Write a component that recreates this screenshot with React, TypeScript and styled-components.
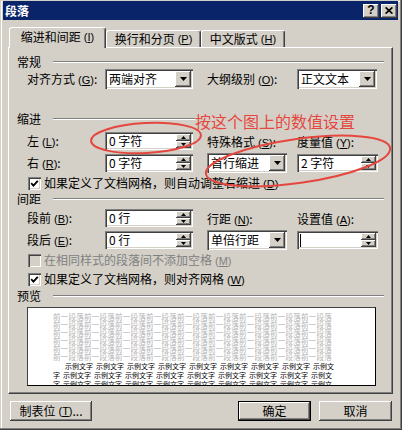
import React from 'react';
import styled, { createGlobalStyle } from 'styled-components';

const GlobalStyle = createGlobalStyle`
  html, body {
    margin: 0;
    padding: 0;
    background: #d4d0c8;
  }
  body {
    font-family: "Noto Sans CJK SC", "Liberation Sans", sans-serif;
    font-size: 12px;
    color: #000;
  }
  * {
    box-sizing: border-box;
  }
`;

const raised = `
  background: #d4d0c8;
  box-shadow: inset -1px -1px #404040, inset 1px 1px #ffffff, inset -2px -2px #808080, inset 2px 2px #d4d0c8;
`;

const sunken = `
  background: #ffffff;
  box-shadow: inset 1px 1px #808080, inset 2px 2px #404040, inset -1px -1px #ffffff, inset -2px -2px #d4d0c8;
`;

const Window = styled.div`
  position: relative;
  width: 402px;
  height: 430px;
  padding: 1px 4px 4px 3px;
  display: flex;
  flex-direction: column;
  background: #d4d0c8;
  box-shadow: inset -1px -1px #404040, inset -2px -2px #808080, inset 1px 1px #d4d0c8, inset 2px 2px #ffffff;
  overflow: hidden;
`;

const TitleBar = styled.div`
  height: 19px;
  background: #0a246a;
  display: flex;
  align-items: center;
  justify-content: space-between;
  padding: 0 1px 0 2px;
`;

const Title = styled.span`
  color: #fff;
  font-weight: bold;
  font-size: 12px;
  line-height: 14px;
`;

const CaptionButtons = styled.div`
  display: flex;
  gap: 2px;
`;

const CaptionButton = styled.div`
  ${raised}
  width: 16px;
  height: 14px;
  display: flex;
  align-items: center;
  justify-content: center;
  font: bold 12px "Liberation Sans", sans-serif;
  line-height: 12px;
  padding-bottom: 1px;
`;

const Body = styled.div`
  flex: 1;
  display: flex;
  flex-direction: column;
  padding: 7px 5px 0 5px;
`;

const TabRow = styled.div`
  height: 20px;
  display: flex;
  align-items: flex-end;
  padding-left: 1px;
  position: relative;
  z-index: 1;
`;

const Tab = styled.div<{ $active?: boolean; $w: number }>`
  width: ${(p) => p.$w}px;
  height: ${(p) => (p.$active ? 21 : 17)}px;
  margin-bottom: ${(p) => (p.$active ? -1 : 0)}px;
  background: #d4d0c8;
  border-top: 1px solid #fff;
  border-left: 1px solid #fff;
  border-right: 1px solid #404040;
  border-radius: 3px 3px 0 0;
  box-shadow: inset -1px 0 #808080;
  display: flex;
  align-items: center;
  justify-content: center;
  line-height: 14px;
  padding-bottom: ${(p) => (p.$active ? 2 : 0)}px;
  white-space: nowrap;
`;

const Panel = styled.div`
  height: 347px;
  border-top: 1px solid #fff;
  border-left: 1px solid #fff;
  border-right: 1px solid #404040;
  border-bottom: 1px solid #404040;
  box-shadow: inset -1px -1px #808080;
  padding: 7px 8px 0 8px;
  display: flex;
  flex-direction: column;
`;

const GroupHeader = styled.div<{ $mt?: number }>`
  height: 14px;
  line-height: 14px;
  margin-top: ${(p) => p.$mt ?? 0}px;
  display: flex;
  align-items: center;
  gap: 12px;

  &::after {
    content: '';
    flex: 1;
    border-top: 1px solid #808080;
    border-bottom: 1px solid #fff;
  }
`;

const FieldGrid = styled.div<{ $mt?: number }>`
  display: grid;
  grid-template-columns: 78px 102px 90px 81px;
  row-gap: 3px;
  align-items: center;
  margin: ${(p) => p.$mt ?? 0}px 0 0 10px;
`;

const Label = styled.span<{ $bottom?: boolean }>`
  line-height: 14px;
  white-space: nowrap;
  align-self: ${(p) => (p.$bottom ? 'end' : 'center')};
`;

const Key = styled.span`
  font-family: "Liberation Sans", sans-serif;
  font-size: 11px;
  margin-left: 3px;
`;

const Combo = styled.div<{ $w: number }>`
  ${sunken}
  width: ${(p) => p.$w}px;
  height: 20px;
  padding: 2px;
  display: flex;
  align-items: stretch;
`;

const FieldText = styled.span`
  flex: 1;
  padding-left: 2px;
  line-height: 14px;
  align-self: center;
  white-space: nowrap;
`;

const DropButton = styled.div`
  ${raised}
  width: 16px;
  display: flex;
  align-items: center;
  justify-content: center;
`;

const Spin = styled.div<{ $w: number }>`
  ${sunken}
  width: ${(p) => p.$w}px;
  height: 18px;
  padding: 2px;
  display: flex;
  align-items: stretch;
`;

const Caret = styled.span`
  display: inline-block;
  width: 1px;
  height: 13px;
  background: #000;
  margin-left: 1px;
  align-self: center;
`;

const SpinButtons = styled.div`
  width: 15px;
  display: flex;
  flex-direction: column;
`;

const SpinButton = styled.div`
  ${raised}
  flex: 1;
  display: flex;
  align-items: center;
  justify-content: center;
`;

const CheckRow = styled.div<{ $mt: number; $disabled?: boolean }>`
  display: flex;
  align-items: center;
  gap: 3px;
  margin: ${(p) => p.$mt}px 0 0 11px;
  height: 14px;
  line-height: 14px;
  color: ${(p) => (p.$disabled ? '#808080' : '#000')};
  white-space: nowrap;
`;

const CheckBox = styled.div<{ $disabled?: boolean }>`
  ${sunken}
  width: 13px;
  height: 13px;
  background: ${(p) => (p.$disabled ? '#d4d0c8' : '#fff')};
  display: flex;
  align-items: center;
  justify-content: center;
`;

const Preview = styled.div`
  margin: 4px 0 0 10px;
  width: 349px;
  height: 79px;
  background: #fff;
  border: 1px solid #000;
  border-left-color: #404040;
  border-top-color: #404040;
  padding: 5px 0 0 25px;
  overflow: hidden;
`;

/* the page preview is tiny; draw it at double size and halve it */
const PreviewText = styled.div`
  transform: scale(0.5);
  transform-origin: 0 0;
  width: 600px;
`;

const GhostLine = styled.div`
  width: 558px;
  font-size: 15px;
  letter-spacing: 0.5px;
  line-height: 16px;
  height: 16px;
  color: #b4b4b4;
  white-space: nowrap;
  overflow: hidden;
`;

const SampleLine = styled.div<{ $indent?: boolean }>`
  display: flex;
  gap: 6px;
  height: 18px;
  padding-left: ${(p) => (p.$indent ? 24 : 0)}px;
`;

const SampleWord = styled.span<{ $n: number }>`
  flex: none;
  width: ${(p) => p.$n * 14}px;
  overflow: hidden;
  font-size: 14px;
  line-height: 18px;
  white-space: nowrap;
`;

const Footer = styled.div`
  display: flex;
  align-items: center;
  padding: 7px 1px 0 2px;
  gap: 8px;
`;

const Button = styled.div<{ $w: number; $default?: boolean }>`
  ${raised}
  width: ${(p) => p.$w}px;
  height: 20px;
  display: flex;
  align-items: center;
  justify-content: center;
  line-height: 14px;
  white-space: nowrap;
  border: ${(p) => (p.$default ? '1px solid #000' : 'none')};
`;

const Spacer = styled.div`
  flex: 1;
`;

const Annotation = styled.div`
  position: absolute;
  left: 195px;
  top: 111px;
  width: 192px;
  height: 20px;
  background: #d4d0c8;
  color: #e5473f;
  font-size: 16px;
  line-height: 20px;
  white-space: nowrap;
`;

const Marks = styled.svg`
  position: absolute;
  left: 0;
  top: 0;
  pointer-events: none;
`;

function Acc({ k }: { k: string }) {
  return (
    <Key>
      (<u>{k}</u>)
    </Key>
  );
}

function DownArrow({ w = 7, h = 4 }: { w?: number; h?: number }) {
  return (
    <svg width={w} height={h} viewBox={`0 0 ${w} ${h}`}>
      <polygon points={`0,0 ${w},0 ${w / 2},${h}`} fill="#000" />
    </svg>
  );
}

function UpArrow() {
  return (
    <svg width={5} height={3} viewBox="0 0 5 3">
      <polygon points="0,3 5,3 2.5,0" fill="#000" />
    </svg>
  );
}

function ComboBox({ w, value }: { w: number; value: string }) {
  return (
    <Combo $w={w}>
      <FieldText>{value}</FieldText>
      <DropButton>
        <DownArrow />
      </DropButton>
    </Combo>
  );
}

function SpinBox({ w, value }: { w: number; value?: string }) {
  return (
    <Spin $w={w}>
      {value ? (
        <FieldText>{value}</FieldText>
      ) : (
        <>
          <Caret />
          <FieldText />
        </>
      )}
      <SpinButtons>
        <SpinButton>
          <UpArrow />
        </SpinButton>
        <SpinButton>
          <DownArrow w={5} h={3} />
        </SpinButton>
      </SpinButtons>
    </Spin>
  );
}

function Check({ label, k, mt, disabled }: { label: string; k: string; mt: number; disabled?: boolean }) {
  return (
    <CheckRow $mt={mt} $disabled={disabled}>
      <CheckBox $disabled={disabled}>
        {!disabled && (
          <svg width={9} height={9} viewBox="0 0 9 9">
            <path d="M1.2 4.2 L3.4 6.6 L7.8 1.8" stroke="#000" strokeWidth={1.8} fill="none" />
          </svg>
        )}
      </CheckBox>
      <span>
        {label}
        <Acc k={k} />
      </span>
    </CheckRow>
  );
}

const ghost = '前一段落'.repeat(9);
const words = Array.from({ length: 8 }, () => '示例文字');
const sampleFirst = [...words, '示例文'];
const sampleRest = ['字', ...words, '示例文'];

function Sample({ items, indent }: { items: string[]; indent?: boolean }) {
  return (
    <SampleLine $indent={indent}>
      {items.map((w, i) => (
        <SampleWord key={i} $n={w.length}>
          {w}
        </SampleWord>
      ))}
    </SampleLine>
  );
}

export default function App() {
  return (
    <Window>
      <GlobalStyle />
      <TitleBar>
        <Title>段落</Title>
        <CaptionButtons>
          <CaptionButton>?</CaptionButton>
          <CaptionButton>
            <svg width={8} height={7} viewBox="0 0 8 7">
              <path d="M0.6 0.4 L7.4 6.6 M7.4 0.4 L0.6 6.6" stroke="#000" strokeWidth={1.7} />
            </svg>
          </CaptionButton>
        </CaptionButtons>
      </TitleBar>

      <Body>
        <TabRow>
          <Tab $active $w={97}>
            缩进和间距<Acc k="I" />
          </Tab>
          <Tab $w={95}>
            换行和分页<Acc k="P" />
          </Tab>
          <Tab $w={84}>
            中文版式<Acc k="H" />
          </Tab>
        </TabRow>

        <Panel>
          <GroupHeader>常规</GroupHeader>
          <FieldGrid>
            <Label>
              对齐方式<Acc k="G" />:
            </Label>
            <ComboBox w={88} value="两端对齐" />
            <Label>
              大纲级别<Acc k="O" />:
            </Label>
            <ComboBox w={80} value="正文文本" />
          </FieldGrid>

          <GroupHeader $mt={23}>缩进</GroupHeader>
          <FieldGrid $mt={6}>
            <Label>
              左<Acc k="L" />:
            </Label>
            <SpinBox w={88} value="0 字符" />
            <Label $bottom>
              特殊格式<Acc k="S" />:
            </Label>
            <Label $bottom>
              度量值<Acc k="Y" />:
            </Label>
            <Label>
              右<Acc k="R" />:
            </Label>
            <SpinBox w={88} value="0 字符" />
            <ComboBox w={80} value="首行缩进" />
            <SpinBox w={81} value="2 字符" />
          </FieldGrid>
          <Check mt={3} label="如果定义了文档网格，则自动调整右缩进" k="D" />

          <GroupHeader $mt={2}>间距</GroupHeader>
          <FieldGrid $mt={3}>
            <Label>
              段前<Acc k="B" />:
            </Label>
            <SpinBox w={88} value="0 行" />
            <Label $bottom>
              行距<Acc k="N" />:
            </Label>
            <Label $bottom>
              设置值<Acc k="A" />:
            </Label>
            <Label>
              段后<Acc k="E" />:
            </Label>
            <SpinBox w={88} value="0 行" />
            <ComboBox w={80} value="单倍行距" />
            <SpinBox w={81} />
          </FieldGrid>
          <Check mt={3} disabled label="在相同样式的段落间不添加空格" k="M" />
          <Check mt={5} label="如果定义了文档网格，则对齐网格" k="W" />

          <GroupHeader $mt={3}>预览</GroupHeader>
          <Preview>
            <PreviewText>
              {Array.from({ length: 6 }, (_, i) => (
                <GhostLine key={i}>{ghost}</GhostLine>
              ))}
              <Sample items={sampleFirst} indent />
              <Sample items={sampleRest} />
              <Sample items={sampleRest} />
            </PreviewText>
          </Preview>
        </Panel>

        <Footer>
          <Button $w={82}>
            制表位<Acc k="T" />...
          </Button>
          <Spacer />
          <Button $w={73} $default>
            确定
          </Button>
          <Button $w={73}>取消</Button>
        </Footer>
      </Body>

      <Annotation>按这个图上的数值设置</Annotation>
      <Marks width={402} height={430} viewBox="0 0 402 430">
        <ellipse cx={146} cy={138} rx={55} ry={15} transform="rotate(-3 146 138)" fill="none" stroke="#e5473f" strokeWidth={2} />
        <ellipse cx={298} cy={161} rx={93} ry={22} transform="rotate(-8 298 161)" fill="none" stroke="#e5473f" strokeWidth={2} />
      </Marks>
    </Window>
  );
}
